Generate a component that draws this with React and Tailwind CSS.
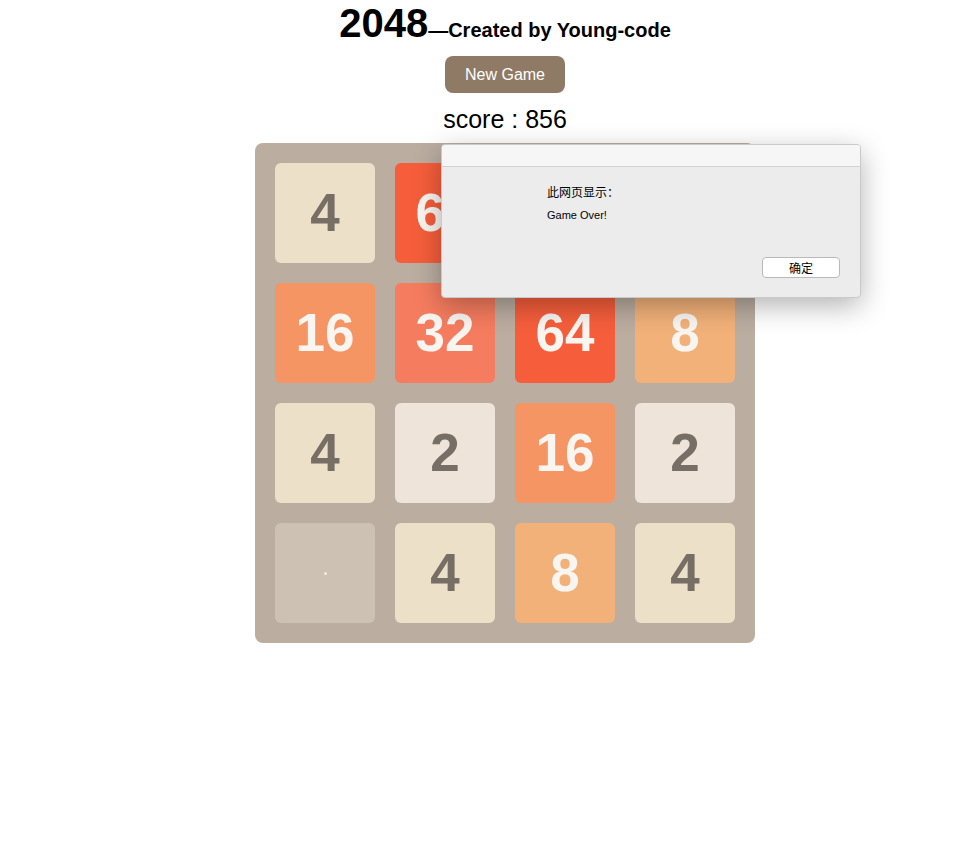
const tiles = [
  4, 64, 2, 4,
  16, 32, 64, 8,
  4, 2, 16, 2,
  0, 4, 8, 4,
];

const tileStyle = {
  0: 'bg-[#cdc1b4]',
  2: 'bg-[#eee4da] text-[#776e65]',
  4: 'bg-[#ede0c8] text-[#776e65]',
  8: 'bg-[#f2b179] text-[#f9f6f2]',
  16: 'bg-[#f59563] text-[#f9f6f2]',
  32: 'bg-[#f67c5f] text-[#f9f6f2]',
  64: 'bg-[#f65e3b] text-[#f9f6f2]',
};

const Tile = ({ value }) => (
  <div className={`w-[100px] h-[100px] rounded-[6px] flex items-center justify-center text-[53px] font-bold ${tileStyle[value]}`}>
    {value === 0 ? <span className="w-[3px] h-[3px] rounded-full bg-[#f1ebe5]" /> : value}
  </div>
);

const AlertDialog = () => (
  <div className="absolute left-[441px] top-[144px] w-[420px] h-[154px] rounded-[4px] border border-[#c9c9c9] bg-[#ececec] shadow-[0_8px_28px_rgba(0,0,0,0.3)] overflow-hidden font-['Liberation_Sans','Noto_Sans_CJK_SC',sans-serif] text-black">
    <div className="h-[22px] bg-[#f6f6f6] border-b border-[#d3d3d3]" />
    <div className="pl-[105px] pt-[17px]">
      <p className="text-[12px] leading-[16px] font-['Noto_Sans_CJK_SC',sans-serif]">此网页显示：</p>
      <p className="text-[11px] leading-[14px] mt-[8px]">Game Over!</p>
    </div>
    <button className="absolute left-[320px] top-[112px] w-[78px] h-[21px] rounded-[4px] border border-[#b9b9b9] bg-white text-[12px] leading-none font-['Noto_Sans_CJK_SC',sans-serif]">
      确定
    </button>
  </div>
);

export default function App() {
  return (
    <div className="relative min-h-screen bg-white pl-[30px] text-black font-['Liberation_Sans',Arial,sans-serif]">
      <h1 className="text-center font-bold text-[40px] leading-[46px]">
        2048<span className="text-[20px] leading-none">—Created by Young-code</span>
      </h1>

      <div className="flex justify-center mt-[10px]">
        <button className="w-[120px] h-[37px] rounded-[8px] bg-[#8f7a66] text-white text-[16px]">
          New Game
        </button>
      </div>

      <p className="text-center text-[25px] leading-[29px] mt-[12px]">score : 856</p>

      <div className="mx-auto mt-[9px] w-[500px] h-[500px] rounded-[8px] bg-[#bbada0] p-[20px] grid grid-cols-4 gap-[20px]">
        {tiles.map((v, i) => (
          <Tile key={i} value={v} />
        ))}
      </div>

      <AlertDialog />
    </div>
  );
}
